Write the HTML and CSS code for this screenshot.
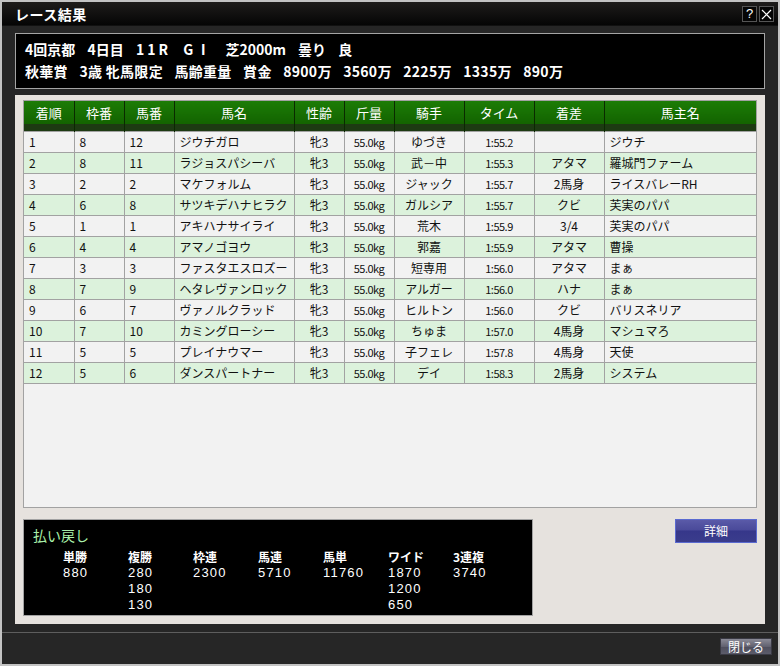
FILE: index.html
```html
<!DOCTYPE html>
<html lang="ja">
  <head>
    <meta charset="UTF-8" />
    <title>レース結果</title>
    <link rel="stylesheet" href="styles.css">
  </head>
  <body>
    <div class="window">
      <!-- title bar -->
      <div class="titlebar">
        <span class="title">レース結果</span>
        <div class="tb-buttons">
          <span class="tb-btn">?</span>
          <span class="tb-btn">
            <svg width="11" height="11" viewBox="0 0 11 11"><path d="M1 1L10 10M10 1L1 10" stroke="#fff" stroke-width="1.2"/></svg>
          </span>
        </div>
      </div>

      <div class="main">
        <div class="info">
          <p class="line1">4回京都 4日目 <span class="wide">11R</span> <span class="wide">GⅠ</span> 芝2000m 曇り 良</p>
          <p class="line2">秋華賞 3歳<span class="tight"> </span>牝馬限定 馬齢重量 賞金 8900万 3560万 2225万 1335万 890万</p>
        </div>

        <div class="panel">
          <div class="table-box">
            <table class="result">
              <colgroup>
                <col style="width:50px"><col style="width:50px"><col style="width:50px">
                <col style="width:120px"><col style="width:50px"><col style="width:50px">
                <col style="width:70px"><col style="width:70px"><col style="width:70px">
                <col>
              </colgroup>
              <thead>
                <tr>
                  <th>着順</th><th>枠番</th><th>馬番</th><th>馬名</th><th>性齢</th>
                  <th>斤量</th><th>騎手</th><th>タイム</th><th>着差</th><th>馬主名</th>
                </tr>
              </thead>
              <tbody id="rows"></tbody>
            </table>
          </div>

          <div class="bottom">
            <div class="payout">
              <div class="payout-title">払い戻し</div>
              <div class="payout-cols">
                <div class="pcol"><b>単勝</b><span>880</span></div>
                <div class="pcol"><b>複勝</b><span>280</span><span>180</span><span>130</span></div>
                <div class="pcol"><b>枠連</b><span>2300</span></div>
                <div class="pcol"><b>馬連</b><span>5710</span></div>
                <div class="pcol"><b>馬単</b><span>11760</span></div>
                <div class="pcol"><b>ワイド</b><span>1870</span><span>1200</span><span>650</span></div>
                <div class="pcol"><b>3連複</b><span>3740</span></div>
              </div>
            </div>
            <div class="detail-btn">詳細</div>
          </div>
        </div>
      </div>

      <div class="footer">
        <div class="close-btn">閉じる</div>
      </div>
    </div>

    <script type="text/javascript">
      const results=[
        [1,8,12,"ジウチガロ","牝3","55.0kg","ゆづき","1:55.2","","ジウチ"],
        [2,8,11,"ラジョスパシーバ","牝3","55.0kg","武－中","1:55.3","アタマ","羅城門ファーム"],
        [3,2,2,"マケフォルム","牝3","55.0kg","ジャック","1:55.7","2馬身","ライスバレーRH"],
        [4,6,8,"サツキデハナヒラク","牝3","55.0kg","ガルシア","1:55.7","クビ","芙実のパパ"],
        [5,1,1,"アキハナサイライ","牝3","55.0kg","荒木","1:55.9","3/4","芙実のパパ"],
        [6,4,4,"アマノゴヨウ","牝3","55.0kg","郭嘉","1:55.9","アタマ","曹操"],
        [7,3,3,"ファスタエスロズー","牝3","55.0kg","短専用","1:56.0","アタマ","まぁ"],
        [8,7,9,"ヘタレヴァンロック","牝3","55.0kg","アルガー","1:56.0","ハナ","まぁ"],
        [9,6,7,"ヴァノルクラッド","牝3","55.0kg","ヒルトン","1:56.0","クビ","バリスネリア"],
        [10,7,10,"カミングローシー","牝3","55.0kg","ちゅま","1:57.0","4馬身","マシュマろ"],
        [11,5,5,"プレイナウマー","牝3","55.0kg","子フェレ","1:57.8","4馬身","天使"],
        [12,5,6,"ダンスパートナー","牝3","55.0kg","デイ","1:58.3","2馬身","システム"]
      ]
      const tbody=document.querySelector("#rows")
      tbody.innerHTML=results.map((r)=>`
        <tr>
          <td>${r[0]}</td><td>${r[1]}</td><td>${r[2]}</td><td>${r[3]}</td>
          <td class="c">${r[4]}</td><td class="c small">${r[5]}</td><td class="c">${r[6]}</td>
          <td class="c small">${r[7]}</td><td class="c">${r[8]}</td><td>${r[9]}</td>
        </tr>`).join("")
    </script>
  </body>
</html>
```

FILE: styles.css
```css
*{
    padding:0;
    margin:0;
    box-sizing:border-box;
}
body{
    background:#262626;
    font-family:"Noto Sans CJK JP","Liberation Sans",sans-serif;
}
.window{
    width:780px;
    height:666px;
    border:2px solid #c3c3c3;
    background:#262626;
    display:flex;
    flex-direction:column;
}
.titlebar{
    height:24px;
    background:linear-gradient(#1e1c1b,#050505);
    display:flex;
    align-items:center;
    justify-content:space-between;
    padding:0 4px 0 13px;
    border-bottom:1px solid #111;
}
.title{
    color:#fff;
    font-size:14px;
    font-weight:bold;
    letter-spacing:0.5px;
}
.tb-buttons{
    display:flex;
    gap:2px;
    margin-top:1px;
}
.tb-btn{
    width:15px;
    height:16px;
    border:1px solid #555;
    background:#050505;
    color:#fff;
    font-size:13px;
    line-height:14px;
    text-align:center;
    display:flex;
    align-items:center;
    justify-content:center;
    font-family:"Liberation Sans",sans-serif;
}
.main{
    padding:7px 13px 0;
}
.info{
    height:56px;
    background:#000;
    border:1px solid #a4a4a4;
    padding:4px 9px;
    color:#fff;
    font-size:14px;
    font-weight:bold;
    white-space:nowrap;
}
.info p{
    line-height:22px;
}
.line1{
    word-spacing:9px;
}
.line1 .wide{
    letter-spacing:3px;
}
.line2{
    word-spacing:8px;
    letter-spacing:0.3px;
}
.line2 .tight{
    word-spacing:0;
}
.panel{
    margin-top:6px;
    height:529px;
    background:#e6e2de;
    padding:5px 8px 0;
}
.table-box{
    height:408px;
    background:#f2f2f2;
    border:1px solid #a2a2a2;
}
.result{
    width:100%;
    border-collapse:collapse;
    table-layout:fixed;
    font-size:12px;
    color:#111;
}
.result th{
    height:30px;
    padding-bottom:7px;
    color:#fff;
    font-weight:normal;
    font-size:13px;
    background:linear-gradient(#1c7c06 0,#136300 76%,#1d3a12 77%,#1d3a12 100%);
    border-left:1px solid #0a2a00;
}
.result th:first-child{
    border-left:none;
}
.result td{
    height:21px;
    padding:0 5px;
    border:1px solid #a2a2a2;
    white-space:nowrap;
    overflow:hidden;
}
.result td:first-child{
    border-left:none;
}
.result td:last-child{
    border-right:none;
}
.result tbody tr:nth-child(even) td{
    background:#dcf2dc;
}
.result td.c{
    text-align:center;
}
.result td.small{
    font-size:11px;
    letter-spacing:-0.5px;
}
.bottom{
    margin-top:11px;
    display:flex;
    justify-content:space-between;
    align-items:flex-start;
}
.payout{
    width:510px;
    height:97px;
    background:#000;
    border:1px solid #a2a2a2;
    padding:7px 9px;
    color:#fff;
}
.payout-title{
    color:#aaf0aa;
    font-size:14px;
    line-height:16px;
    height:18px;
}
.payout-cols{
    display:flex;
    padding-left:30px;
    margin-top:4px;
}
.pcol{
    width:65px;
    display:flex;
    flex-direction:column;
}
.pcol b{
    display:block;
    height:16px;
    font-size:12px;
    line-height:16px;
}
.pcol span{
    display:block;
    height:16px;
    font-family:"Liberation Sans",sans-serif;
    font-size:13px;
    line-height:16px;
    letter-spacing:1.2px;
}
.detail-btn{
    width:82px;
    height:24px;
    border:1px solid #5a6ad0;
    background:linear-gradient(#5a5aa8 0,#4a4a9a 45%,#36378a 50%,#3a3c8c 100%);
    color:#fff;
    font-size:12px;
    text-align:center;
    line-height:22px;
}
.footer{
    margin-top:8px;
    border-top:1px solid #5e5e5e;
    flex:1;
    display:flex;
    justify-content:flex-end;
    padding:5px 6px 0 0;
}
.close-btn{
    width:52px;
    height:17px;
    background:linear-gradient(#8a8a96 0,#626270 50%,#4e4e5c 52%,#5c5c6a 100%);
    border:1px solid #3a3a44;
    color:#fff;
    font-size:12px;
    text-align:center;
    line-height:15px;
}
```
